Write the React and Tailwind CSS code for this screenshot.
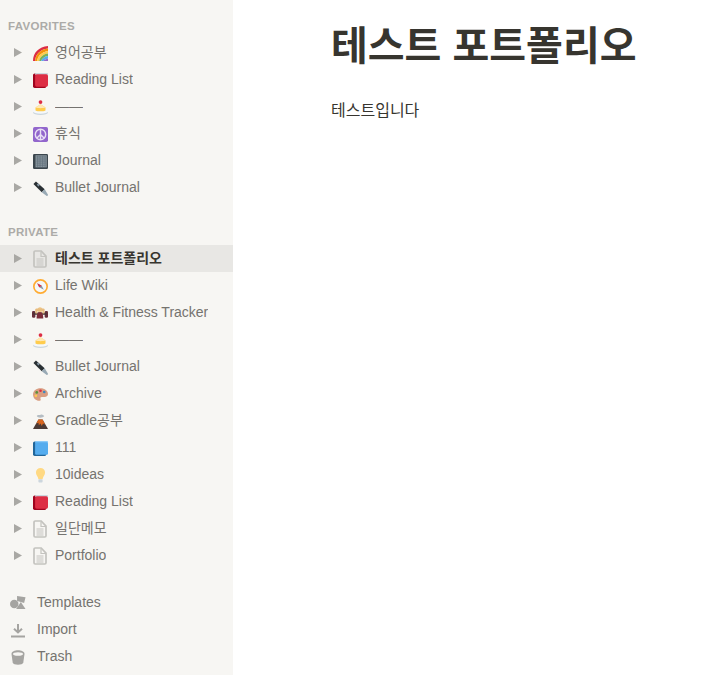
const font = { fontFamily: '"Liberation Sans","Noto Sans CJK KR",sans-serif' };

const Arrow = () => (
  <svg width="8" height="9" viewBox="0 0 8 9" className="shrink-0"><path d="M0 0L8 4.500L0 9Z" fill="#a9a8a4" /></svg>
);
const S = ({ children, w = 15 }) => (
  <svg width={w} height="15" viewBox={`0 0 ${(36 * w) / 15} 36`} className="mt-[2px] shrink-0">{children}</svg>
);
const Rainbow = () => (
  <S>
    <path d="M0 36C0 16 14 2 36 0v6C18 8 6 20 5 36Z" fill="#dd2e44" />
    <path d="M5 36C6 20 18 8 36 6v6C22 14 11 24 10 36Z" fill="#f4900c" />
    <path d="M10 36C11 24 22 14 36 12v6C26 19 16 27 15 36Z" fill="#ffcc4d" />
    <path d="M15 36C16 27 26 19 36 18v6C29 25 21 30 20 36Z" fill="#78b159" />
    <path d="M20 36C21 30 29 25 36 24v6C32 31 26 33 25 36Z" fill="#55acee" />
    <path d="M25 36c1-3 7-5 11-6v6Z" fill="#9266cc" />
  </S>
);
const RedBook = () => (
  <S>
    <rect x="0" y="1" width="32" height="35" rx="4" fill="#a0041e" />
    <rect x="5" y="0" width="31" height="5" rx="2" fill="#ccd6dd" />
    <rect x="5" y="3" width="31" height="30" rx="4" fill="#dd2e44" />
  </S>
);
const BlueBook = () => (
  <S>
    <rect x="0" y="1" width="32" height="35" rx="4" fill="#226699" />
    <rect x="5" y="0" width="31" height="5" rx="2" fill="#8ccaf7" />
    <rect x="5" y="3" width="31" height="30" rx="3" fill="#55acee" />
  </S>
);
const Cake = () => (
  <S>
    <ellipse cx="18" cy="30" rx="18" ry="6" fill="#ccd6dd" />
    <ellipse cx="18" cy="27" rx="18" ry="6" fill="#f5f8fa" />
    <path d="M6 18l12-8 12 8v7c-6 3-18 3-24 0Z" fill="#ffcc4d" />
    <path d="M6 18l12-8 12 8c-6 2-18 2-24 0Z" fill="#ffe8b6" />
    <circle cx="18" cy="5" r="4.500" fill="#dd2e44" />
  </S>
);
const Peace = () => (
  <S>
    <rect x="0" y="0" width="36" height="36" rx="4" fill="#9266cc" />
    <circle cx="18" cy="18" r="12.500" fill="none" stroke="#e8dff4" strokeWidth="3.500" />
    <path d="M18 6v24M18 18L9.500 26.500M18 18l8.500 8.500" stroke="#e8dff4" strokeWidth="3.500" fill="none" />
  </S>
);
const Notebook = () => (
  <S>
    <rect x="0" y="0" width="36" height="36" rx="3" fill="#3b464d" />
    <rect x="6" y="3" width="27" height="29" fill="#8a979f" />
    <path d="M8 7h23M8 12h23M8 17h23M8 22h23M8 27h23" stroke="#66757f" strokeWidth="2" />
    <path d="M11 4v27M17 4v27M23 4v27M29 4v27" stroke="#66757f" strokeWidth="2" />
  </S>
);
const Pen = () => (
  <S>
    <path d="M1 7l6-6 21 19-7 7Z" fill="#292f33" />
    <path d="M9 9l3-3 4 4-3 3Z" fill="#8899a6" />
    <path d="M21 27l7-7 8 13c0 2-2 3-3 3Z" fill="#99aab5" />
  </S>
);
const Doc = () => (
  <svg width="14" height="18" viewBox="0 0 14 18" className="mt-px shrink-0">
    <path d="M1 2.200a1.200 1.200 0 0 1 1.200-1.200h6l4.800 5.200v9.600a1.200 1.200 0 0 1-1.200 1.200h-9.600a1.200 1.200 0 0 1-1.200-1.200Z" fill="none" stroke="#c4c3bf" strokeWidth="1.700" />
    <path d="M8 1.500v5h5" fill="none" stroke="#c4c3bf" strokeWidth="1.200" />
    <path d="M3.500 9h7M3.500 11h7M3.500 13h7M3.500 15h7" stroke="#c4c3bf" strokeWidth="1" />
  </svg>
);
const Compass = () => (
  <S>
    <circle cx="18" cy="18" r="16" fill="#f5f8fa" stroke="#ffac33" strokeWidth="4" />
    <path d="M10 10l11 6 5 10-11-6Z" fill="#8899a6" />
    <path d="M10 10l11 6-6 4Z" fill="#dd2e44" />
  </S>
);
const Lifter = () => (
  <S w={16}>
    <rect x="0" y="12" width="8" height="16" rx="3" fill="#662f3a" />
    <rect x="30.400" y="12" width="8" height="16" rx="3" fill="#662f3a" />
    <rect x="3" y="16" width="32" height="5" fill="#4a3338" />
    <path d="M11 30c0-10 3-16 8-16s8 6 8 16Z" fill="#7c2d3a" />
    <circle cx="19.200" cy="9" r="6" fill="#f0c88a" />
    <rect x="8" y="6" width="22" height="6" rx="3" fill="#e8bd80" />
    <rect x="8" y="8" width="5" height="10" fill="#e8bd80" />
    <rect x="25" y="8" width="5" height="10" fill="#e8bd80" />
  </S>
);
const Palette = () => (
  <S>
    <path d="M18 3C8 3 0 9 0 18s7 15 15 15c4 0 4-3 3-5s0-4 3-4h7c5 0 8-3 8-7C36 9 28 3 18 3Z" fill="#d99e82" />
    <circle cx="9" cy="13" r="3.200" fill="#5c913b" />
    <circle cx="18" cy="9" r="3.200" fill="#dd2e44" />
    <circle cx="27" cy="12" r="3.200" fill="#3b88c3" />
    <circle cx="7" cy="21" r="3.200" fill="#ffcc4d" />
  </S>
);
const Volcano = () => (
  <S>
    <path d="M0 36L13 13h10l13 23Z" fill="#4b3a35" />
    <path d="M13 13h10l6 12-5-2-3 6-3-6-4 4-1-6-5 2Z" fill="#d9661f" />
    <path d="M9 5c3-5 6-1 9-3s6-1 9 3c-3 5-15 6-18 0Z" fill="#b5bdc3" />
  </S>
);
const Bulb = () => (
  <S>
    <path d="M29 11c0 6-5 9-6 16H13c-1-7-6-10-6-16a11 11 0 0 1 22 0Z" fill="#ffd983" />
    <rect x="13" y="27" width="10" height="8" rx="2" fill="#ccd6dd" />
  </S>
);

const Row = ({ icon, label, active }) => (
  <div className={`flex h-[27px] items-center pl-[14px] ${active ? 'bg-[#e8e7e4]' : ''}`}>
    <Arrow />
    <div className="ml-[10px] flex w-4 justify-center">{icon}</div>
    <span className={`ml-[7px] truncate text-[14px] ${active ? 'font-bold text-[#37352f]' : 'text-[#75736f]'}`}>{label}</span>
  </div>
);
const Header = ({ children }) => (
  <div className="pl-2 text-[11.500px] font-bold leading-[14px] tracking-[0.3px] text-[#acaba8]">{children}</div>
);
const Tool = ({ icon, label }) => (
  <div className="flex h-[27px] items-center pl-[10px]">
    <div className="flex w-4 justify-center">{icon}</div>
    <span className="ml-[11px] text-[14px] text-[#75736f]">{label}</span>
  </div>
);

export default function App() {
  return (
    <div className="flex h-[675px] w-[715px] overflow-hidden bg-white" style={font}>
      <aside className="flex w-[233px] shrink-0 flex-col bg-[#f7f6f3] pt-[19px]">
        <Header>FAVORITES</Header>
        <div className="mt-[6px]">
          <Row icon={<Rainbow />} label="영어공부" />
          <Row icon={<RedBook />} label="Reading List" />
          <Row icon={<Cake />} label="——" />
          <Row icon={<Peace />} label="휴식" />
          <Row icon={<Notebook />} label="Journal" />
          <Row icon={<Pen />} label="Bullet Journal" />
        </div>
        <div className="mt-[24px]"><Header>PRIVATE</Header></div>
        <div className="mt-[6px]">
          <Row icon={<Doc />} label="테스트 포트폴리오" active />
          <Row icon={<Compass />} label="Life Wiki" />
          <Row icon={<Lifter />} label="Health & Fitness Tracker" />
          <Row icon={<Cake />} label="——" />
          <Row icon={<Pen />} label="Bullet Journal" />
          <Row icon={<Palette />} label="Archive" />
          <Row icon={<Volcano />} label="Gradle공부" />
          <Row icon={<BlueBook />} label="111" />
          <Row icon={<Bulb />} label="10ideas" />
          <Row icon={<RedBook />} label="Reading List" />
          <Row icon={<Doc />} label="일단메모" />
          <Row icon={<Doc />} label="Portfolio" />
        </div>
        <div className="mt-[20px]">
          <Tool label="Templates" icon={
            <svg width="17" height="16" viewBox="0 0 17 16" className="mt-px"><circle cx="4.500" cy="9" r="4.500" fill="#a5a4a1" /><path d="M7.500 .5l9 1.500-1.500 6-3.500-1-4-1Z" fill="#a5a4a1" /><path d="M11.500 7l5 7.500H6.500Z" fill="#a5a4a1" /></svg>
          } />
          <Tool label="Import" icon={
            <svg width="16" height="16" viewBox="0 0 16 16"><path d="M8 2v8.500M4 6.800L8 10.500l4-3.700" fill="none" stroke="#a5a4a1" strokeWidth="2" /><path d="M1 14.500h14" stroke="#a5a4a1" strokeWidth="2" /></svg>
          } />
          <Tool label="Trash" icon={
            <svg width="14" height="15" viewBox="0 0 14 15" className="mt-[2px]"><path d="M.5 4c0-5 13-5 13 0l-1.200 8.500c-.5 3-10.100 3-10.600 0Z" fill="#a5a4a1" /><ellipse cx="7" cy="4" rx="5" ry="1.800" fill="#f7f6f3" /></svg>
          } />
        </div>
      </aside>
      <main className="flex-1 pl-[98px] pt-[16px]">
        <h1 className="text-[40px] font-bold leading-[60px] text-[#37352f]">테스트 포트폴리오</h1>
        <p className="mt-[20px] text-[16px] leading-[30px] text-[#37352f]">테스트입니다</p>
      </main>
    </div>
  );
}
